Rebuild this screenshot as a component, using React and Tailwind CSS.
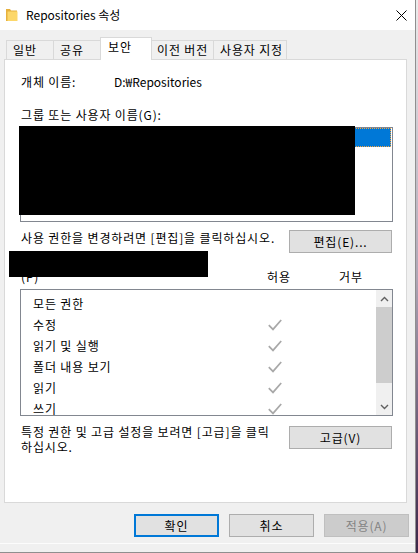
import React from "react";

const perms = [
  { name: "모든 권한", allow: false },
  { name: "수정", allow: true },
  { name: "읽기 및 실행", allow: true },
  { name: "폴더 내용 보기", allow: true },
  { name: "읽기", allow: true },
  { name: "쓰기", allow: true },
];

function Check() {
  return (
    <svg width="14" height="12" viewBox="0 0 14 12">
      <path d="M0.8 6.2 L5 10.4 L13.2 1" fill="none" stroke="#a8a8a8" strokeWidth="1.7" />
    </svg>
  );
}

function Folder() {
  return (
    <svg width="12" height="14" viewBox="0 0 12 14">
      <path d="M0 1 H4 L5 2.5 H11 V13 H0 Z" fill="#e6b13e" />
      <path d="M1.5 3.5 H11.5 V13 H1.5 Z" fill="#fcd76a" />
    </svg>
  );
}

function Chevron({ up }) {
  return (
    <svg width="9" height="6" viewBox="0 0 9 6">
      <path
        d={up ? "M1 5 L4.5 1.5 L8 5" : "M1 1 L4.5 4.5 L8 1"}
        fill="none"
        stroke="#606060"
        strokeWidth="1.4"
      />
    </svg>
  );
}

export default function App() {
  return (
    <div className="w-[418px] h-[553px] flex bg-linear-to-b from-[#ececec] via-[#b0a6b6] to-[#3b2547] font-['Noto_Sans_CJK_KR','Malgun_Gothic',sans-serif] text-[12px] leading-[16px] tracking-[0.85px] text-black">
      <div className="w-[416px] h-[553px] flex flex-col bg-[#f0f0f0] border-r border-b border-[#8f8f8f]">
        {/* title bar */}
        <div className="h-[30px] shrink-0 bg-white flex items-center justify-between pr-[8px]">
          <div className="flex items-center">
            <div className="ml-[6px] flex">
              <Folder />
            </div>
            <span className="ml-[8px] tracking-normal">Repositories 속성</span>
          </div>
          <svg width="11" height="11" viewBox="0 0 11 11">
            <path d="M0.5 0.5 L10.5 10.5 M10.5 0.5 L0.5 10.5" stroke="#000" strokeWidth="1" />
          </svg>
        </div>

        <div className="flex-1 flex flex-col pt-[7px]">
          {/* tabs */}
          <div className="relative z-10 flex items-end h-[23px] pl-[6px]">
            <div className="w-[47px] h-[20px] flex items-center pl-[6px] border-l border-t border-b border-[#d9d9d9]">일반</div>
            <div className="w-[47px] h-[20px] flex items-center pl-[6px] border-l border-t border-b border-[#d9d9d9]">공유</div>
            <div className="w-[52px] h-[23px] flex items-start pt-[1px] pl-[7px] bg-white border-l border-t border-r border-[#d9d9d9]">보안</div>
            <div className="w-[61px] h-[20px] flex items-center pl-[5px] border-t border-b border-[#d9d9d9] whitespace-nowrap">이전 버전</div>
            <div className="w-[74px] h-[20px] flex items-center pl-[6px] border-l border-t border-r border-b border-[#d9d9d9] whitespace-nowrap">사용자 지정</div>
          </div>

          {/* panel */}
          <div className="-mt-[1px] ml-[4px] w-[403px] h-[444px] bg-white border border-[#d9d9d9] pl-[15px] pr-[13px] pt-[14px] flex flex-col">
            <div className="flex h-[16px]">
              <span className="w-[94px] pl-[1px]">개체 이름:</span>
              <span className="tracking-normal">D:₩Repositories</span>
            </div>

            <div className="mt-[17px] pl-[1px] h-[16px]">그룹 또는 사용자 이름(G):</div>

            <div className="relative mt-[4px] h-[95px] border border-[#828790] bg-white">
              <div className="mr-[1px] h-[19px] bg-[#0078d7] border border-dotted border-[#f4a340]" />
              <div className="absolute -left-[2px] -top-[2px] w-[336px] h-[89px] bg-black" />
            </div>

            <div className="mt-[8px] flex justify-between items-start">
              <span className="pl-[1px] leading-[16px] whitespace-nowrap">사용 권한을 변경하려면 [편집]을 클릭하십시오.</span>
              <button className="w-[103px] h-[23px] mr-[1px] bg-[#e1e1e1] border border-[#adadad] text-[12px] leading-[16px]">
                편집(E)...
              </button>
            </div>

            <div className="relative mt-[1px]">
              <div className="h-[15px]" />
              <div className="flex h-[16px]">
                <span className="w-[247px] pl-[1px]">(P)</span>
                <span className="w-[72px]">허용</span>
                <span>거부</span>
              </div>
              <div className="absolute -left-[11px] -top-[3px] w-[199px] h-[26px] bg-black" />
            </div>

            <div className="mt-[4px] h-[127px] border border-[#828790] bg-white flex">
              <div className="flex-1 overflow-hidden pt-[3px]">
                {perms.map((p) => (
                  <div key={p.name} className="h-[21px] shrink-0 flex items-center pl-[12px]">
                    <span className="w-[235px]">{p.name}</span>
                    {p.allow && <Check />}
                  </div>
                ))}
              </div>
              <div className="w-[16px] flex flex-col bg-[#f0f0f0]">
                <div className="h-[17px] flex items-center justify-center">
                  <Chevron up />
                </div>
                <div className="h-[76px] bg-[#cdcdcd]" />
                <div className="flex-1" />
                <div className="h-[17px] flex items-center justify-center">
                  <Chevron />
                </div>
              </div>
            </div>

            <div className="mt-[9px] flex justify-between items-start">
              <span className="pl-[1px] leading-[14.5px] whitespace-nowrap">
                특정 권한 및 고급 설정을 보려면 [고급]을 클릭
                <br />
                하십시오.
              </span>
              <button className="mt-[1px] w-[103px] h-[23px] mr-[1px] bg-[#e1e1e1] border border-[#adadad] text-[12px] leading-[16px]">
                고급(V)
              </button>
            </div>
          </div>

          {/* dialog buttons */}
          <div className="mt-[11px] flex gap-[10px] pl-[134px]">
            <button className="w-[85px] h-[23px] bg-[#e1e1e1] border-2 border-[#0078d7] text-[12px] leading-[16px]">
              확인
            </button>
            <button className="w-[85px] h-[23px] bg-[#e1e1e1] border border-[#adadad] text-[12px] leading-[16px]">
              취소
            </button>
            <button className="w-[85px] h-[23px] bg-[#cccccc] border border-[#bfbfbf] text-[#838383] text-[12px] leading-[16px]">
              적용(A)
            </button>
          </div>
          <div className="mt-[6px] h-[1px] bg-[#fcfcfc]" />
        </div>
      </div>
    </div>
  );
}
